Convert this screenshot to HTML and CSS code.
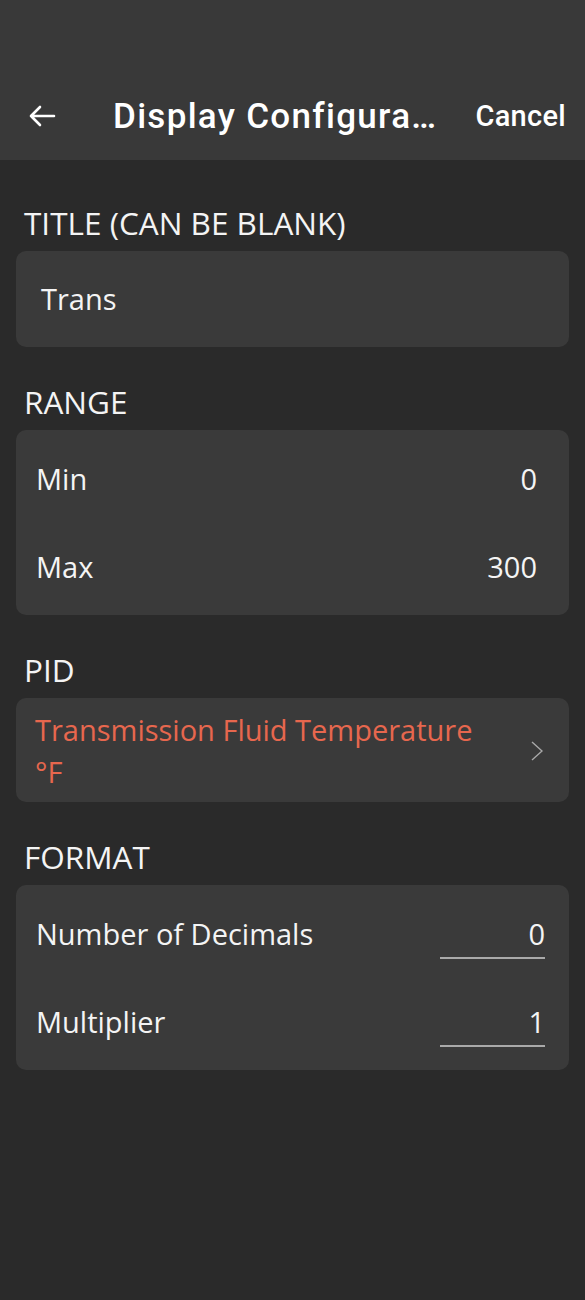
FILE: index.html
```html
<!DOCTYPE html>
<html lang="en">
<head>
<meta charset="utf-8">
<title>Display Configuration</title>
<link rel="stylesheet" href="styles.css">
</head>
<body>
<header class="appbar">
  <div class="toolbar">
    <button class="back" aria-label="Back">
      <svg width="28" height="24" viewBox="0 0 28 24"><path d="M26 12H3M12 3L3 12l9 9" fill="none" stroke="#fff" stroke-width="2.6" stroke-linecap="round" stroke-linejoin="round"/></svg>
    </button>
    <h1 class="title">Display Configura…</h1>
    <span class="cancel">Cancel</span>
  </div>
</header>
<main class="content">
  <h2 class="label">TITLE (CAN BE BLANK)</h2>
  <div class="card card-input">Trans</div>

  <h2 class="label">RANGE</h2>
  <div class="card card-list">
    <div class="row"><span>Min</span><span class="value">0</span></div>
    <div class="row"><span>Max</span><span class="value">300</span></div>
  </div>

  <h2 class="label">PID</h2>
  <div class="card card-link">
    <span class="link-text">Transmission Fluid Temperature °F</span>
    <svg class="chevron" width="12" height="20" viewBox="0 0 12 20"><path d="M1 1l10 9-10 9" fill="none" stroke="#a8a8a8" stroke-width="1.4"/></svg>
  </div>

  <h2 class="label">FORMAT</h2>
  <div class="card card-list">
    <div class="row row-field"><span>Number of Decimals</span><span class="field">0</span></div>
    <div class="row row-field"><span>Multiplier</span><span class="field">1</span></div>
  </div>
</main>
</body>
</html>
```

FILE: styles.css
```css
html, body {
  margin: 0;
  padding: 0;
  background: #2a2a2a;
  height: 100%;
}
body {
  font-family: "Open Sans", "Noto Sans", sans-serif;
  color: #f4f4f4;
}
.appbar {
  background: #393939;
  height: 160px;
  display: flex;
  flex-direction: column;
  justify-content: flex-end;
}
.toolbar {
  height: 80px;
  display: flex;
  align-items: center;
  padding-bottom: 4px;
}
.back {
  background: none;
  border: 0;
  padding: 0;
  margin-left: 28px;
  width: 28px;
  height: 24px;
  display: flex;
}
.title {
  margin: 0 0 0 57px;
  font-family: Roboto, "Liberation Sans", sans-serif;
  font-weight: 500;
  font-size: 35px;
  letter-spacing: 1.3px;
  color: #fff;
  flex: 1;
  white-space: nowrap;
}
.cancel {
  font-family: Roboto, "Liberation Sans", sans-serif;
  font-weight: 500;
  font-size: 29px;
  letter-spacing: 0.3px;
  color: #fff;
  margin-right: 19px;
}
.content {
  padding: 0 16px 0 16px;
}
.label {
  margin: 35px 0 8px 8px;
  font-weight: 400;
  font-size: 31.5px;
  line-height: 40px;
  color: #f4f4f4;
}
.label:first-child {
  margin-top: 43px;
}
.card {
  background: #3a3a3a;
  border-radius: 10px;
  font-size: 29px;
  line-height: 40px;
}
.card-input {
  padding: 28px 25px;
}
.card-list {
  padding: 5px 0 4px;
}
.row {
  height: 88px;
  box-sizing: border-box;
  display: flex;
  align-items: center;
  justify-content: space-between;
  padding: 0 32px 0 20px;
}
.row-field {
  align-items: flex-start;
  padding: 24px 24px 0 20px;
}
.field {
  width: 105px;
  text-align: right;
  border-bottom: 2px solid #a9a9a9;
  line-height: 40px;
  padding-bottom: 3px;
}
.card-link {
  display: flex;
  align-items: center;
  padding: 11px 26px 9px 19px;
  line-height: 42px;
}
.link-text {
  flex: 1;
  color: #e7674e;
  padding-right: 40px;
}
.chevron {
  flex: none;
}
```
